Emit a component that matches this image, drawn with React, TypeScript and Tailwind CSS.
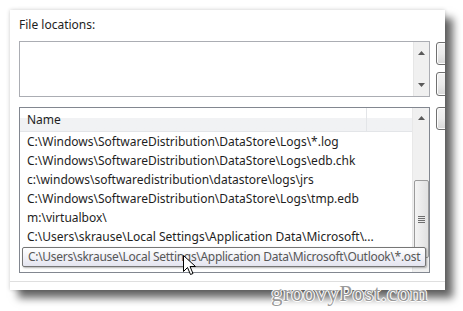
import React from "react";

// Outlook indexing options: file location list with tooltip over the hovered row

const rows = [
  "C:\\Windows\\SoftwareDistribution\\DataStore\\Logs\\*.log",
  "C:\\Windows\\SoftwareDistribution\\DataStore\\Logs\\edb.chk",
  "c:\\windows\\softwaredistribution\\datastore\\logs\\jrs",
  "C:\\Windows\\SoftwareDistribution\\DataStore\\Logs\\tmp.edb",
  "m:\\virtualbox\\",
  "C:\\Users\\skrause\\Local Settings\\Application Data\\Microsoft\\...",
  "",
];

function Arrow({ down = false }: { down?: boolean }) {
  return (
    <svg width="7" height="4" viewBox="0 0 7 4" className="block">
      {down ? (
        <path d="M0 0 H7 L3.5 4 Z" fill="#5a5a5a" />
      ) : (
        <path d="M0 4 H7 L3.5 0 Z" fill="#5a5a5a" />
      )}
    </svg>
  );
}

function SideButton({ className = "" }: { className?: string }) {
  return (
    <div
      className={`w-[60px] shrink-0 rounded-[3px] border border-[#707070] bg-gradient-to-b from-[#f2f2f2] via-[#ebebeb] to-[#d8d8d8] shadow-[inset_0_0_0_1px_#fcfcfc] ${className}`}
    />
  );
}

export default function App() {
  return (
    <div
      className="relative w-[463px] h-[311px] overflow-hidden bg-white text-[12px] text-[#1e1e1e]"
      style={{ fontFamily: "'Noto Sans', 'Liberation Sans', sans-serif" }}
    >
      {/* Dialog panel */}
      <div className="ml-[10px] mt-[10px] w-[435px] h-[280px] overflow-hidden bg-white shadow-[8px_8px_8px_rgba(0,0,0,0.6),0_0_4px_rgba(0,0,0,0.2)]">
        <div className="pl-[9px] pt-[7px] leading-[16px]">File locations:</div>

        {/* top list + buttons */}
        <div className="flex mt-[8px] ml-[9px]">
          <div className="flex shrink-0 w-[411px] h-[56px] border border-[#abadb3] bg-white">
            <div className="flex-1" />
            <div className="flex w-[16px] flex-col items-center justify-between bg-[#f0f0f0] border-l border-[#e6e6e6] py-[9px]">
              <Arrow />
              <Arrow down />
            </div>
          </div>
          <div className="ml-[6px] flex flex-col gap-[7px] pt-[1px]">
            <SideButton className="h-[23px]" />
            <SideButton className="h-[24px]" />
          </div>
        </div>

        {/* bottom list + button */}
        <div className="flex mt-[10px] ml-[9px]">
          <div className="relative flex shrink-0 w-[411px] h-[166px] border border-[#828790] bg-white">
            <div className="flex-1 flex flex-col overflow-hidden">
              {/* header */}
              <div className="flex h-[24px] shrink-0 bg-gradient-to-b from-white from-45% to-[#f1f2f4] to-45% border-b border-[#e3e5e8]">
                <div className="w-[347px] pl-[7px] flex items-center border-r border-[#e3e5e8]">Name</div>
                <div className="flex-1" />
              </div>
              {rows.map((r, i) => (
                <div key={i} className="h-[19px] shrink-0 pl-[7px] flex items-center whitespace-nowrap leading-none">
                  {r}
                </div>
              ))}
            </div>

            {/* scrollbar */}
            <div className="w-[17px] flex flex-col items-center bg-[#f0f0f0] border-l border-[#e8e8e8]">
              <div className="pt-[8px] pb-[60px]">
                <Arrow />
              </div>
              <div className="w-[15px] h-[78px] rounded-[2px] border border-[#9b9b9b] bg-gradient-to-r from-[#f4f4f4] to-[#e1e1e1] flex items-center justify-center">
                <div className="flex flex-col gap-[1px] w-[7px]">
                  <div className="h-px bg-[#6e6e6e]" />
                  <div className="h-px bg-[#6e6e6e]" />
                  <div className="h-px bg-[#6e6e6e]" />
                  <div className="h-px bg-[#6e6e6e]" />
                </div>
              </div>
            </div>

            {/* tooltip over hovered row */}
            <div className="absolute left-[2px] top-[139px] w-[404px] h-[20px] rounded-[2px] border border-[#767676] bg-gradient-to-b from-white to-[#e4e5f0] shadow-[1px_1px_2px_rgba(0,0,0,0.3)] pl-[5px] flex items-center whitespace-nowrap text-[#575757] leading-none tracking-[-0.3px]">
              C:\Users\skrause\Local Settings\Application Data\Microsoft\Outlook\*.ost
            </div>

            {/* mouse cursor */}
            <svg
              className="absolute left-[163px] top-[147px]"
              width="13"
              height="21"
              viewBox="0 0 13 21"
            >
              <path
                d="M0.5 0.5 L0.5 16.5 L4.5 12.5 L7.5 19.5 L10 18.5 L7 11.5 L12.5 11.5 Z"
                fill="white"
                stroke="black"
                strokeWidth="1"
                strokeLinejoin="miter"
              />
            </svg>
          </div>
          <div className="ml-[6px]">
            <SideButton className="h-[23px]" />
          </div>
        </div>

        <div className="mt-[8px] h-px bg-[#dfdfdf]" />
      </div>

      {/* watermark */}
      <div
        className="absolute left-[271px] top-[277px] text-[23px] tracking-[0.5px] text-[#9a9a9a] [text-shadow:0_1px_0_#fff,1px_0_0_#fff,-1px_0_0_#fff,0_-1px_0_#fff]"
        style={{ fontFamily: "'Liberation Serif', serif" }}
      >
        groovyPost.com
      </div>
    </div>
  );
}
